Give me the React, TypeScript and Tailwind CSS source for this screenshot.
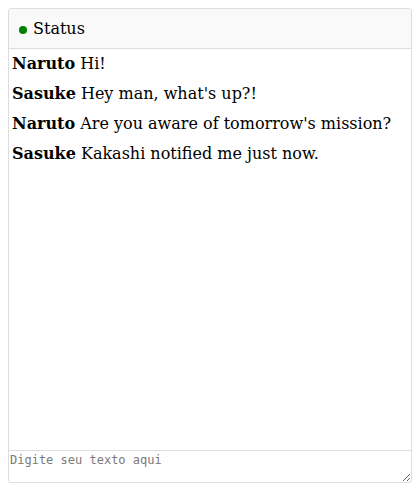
import React from "react";

const messages = [
  { user: "Naruto", text: "Hi!" },
  { user: "Sasuke", text: "Hey man, what's up?!" },
  { user: "Naruto", text: "Are you aware of tomorrow's mission?" },
  { user: "Sasuke", text: "Kakashi notified me just now." },
];

export default function App() {
  return (
    <div className="p-[8px] bg-white" style={{ fontFamily: '"DejaVu Serif", serif' }}>
      <div className="flex flex-col h-[475px] border border-[#dddddd] rounded-[3px] overflow-hidden">
        <div className="h-[40px] flex items-center px-[10px] bg-[#f9f9f9] border-b border-[#dddddd] text-[16px] text-black">
          <span className="w-[8px] h-[8px] rounded-full bg-[#008000] mr-[6px] mt-[2px]" />
          <span>Status</span>
        </div>
        <div className="flex-1 px-[3px] text-[16px] leading-[30px] text-black">
          {messages.map((m, i) => (
            <div key={i}>
              <b className="font-bold">{m.user}</b> {m.text}
            </div>
          ))}
        </div>
        <textarea
          placeholder="Digite seu texto aqui"
          className="block w-full h-[32px] border-t border-[#dddddd] px-[1px] pt-[2px] text-[12px] leading-[15px] placeholder:text-[#7a7a7a] outline-none"
          style={{ fontFamily: '"DejaVu Sans Mono", monospace' }}
        />
      </div>
    </div>
  );
}
